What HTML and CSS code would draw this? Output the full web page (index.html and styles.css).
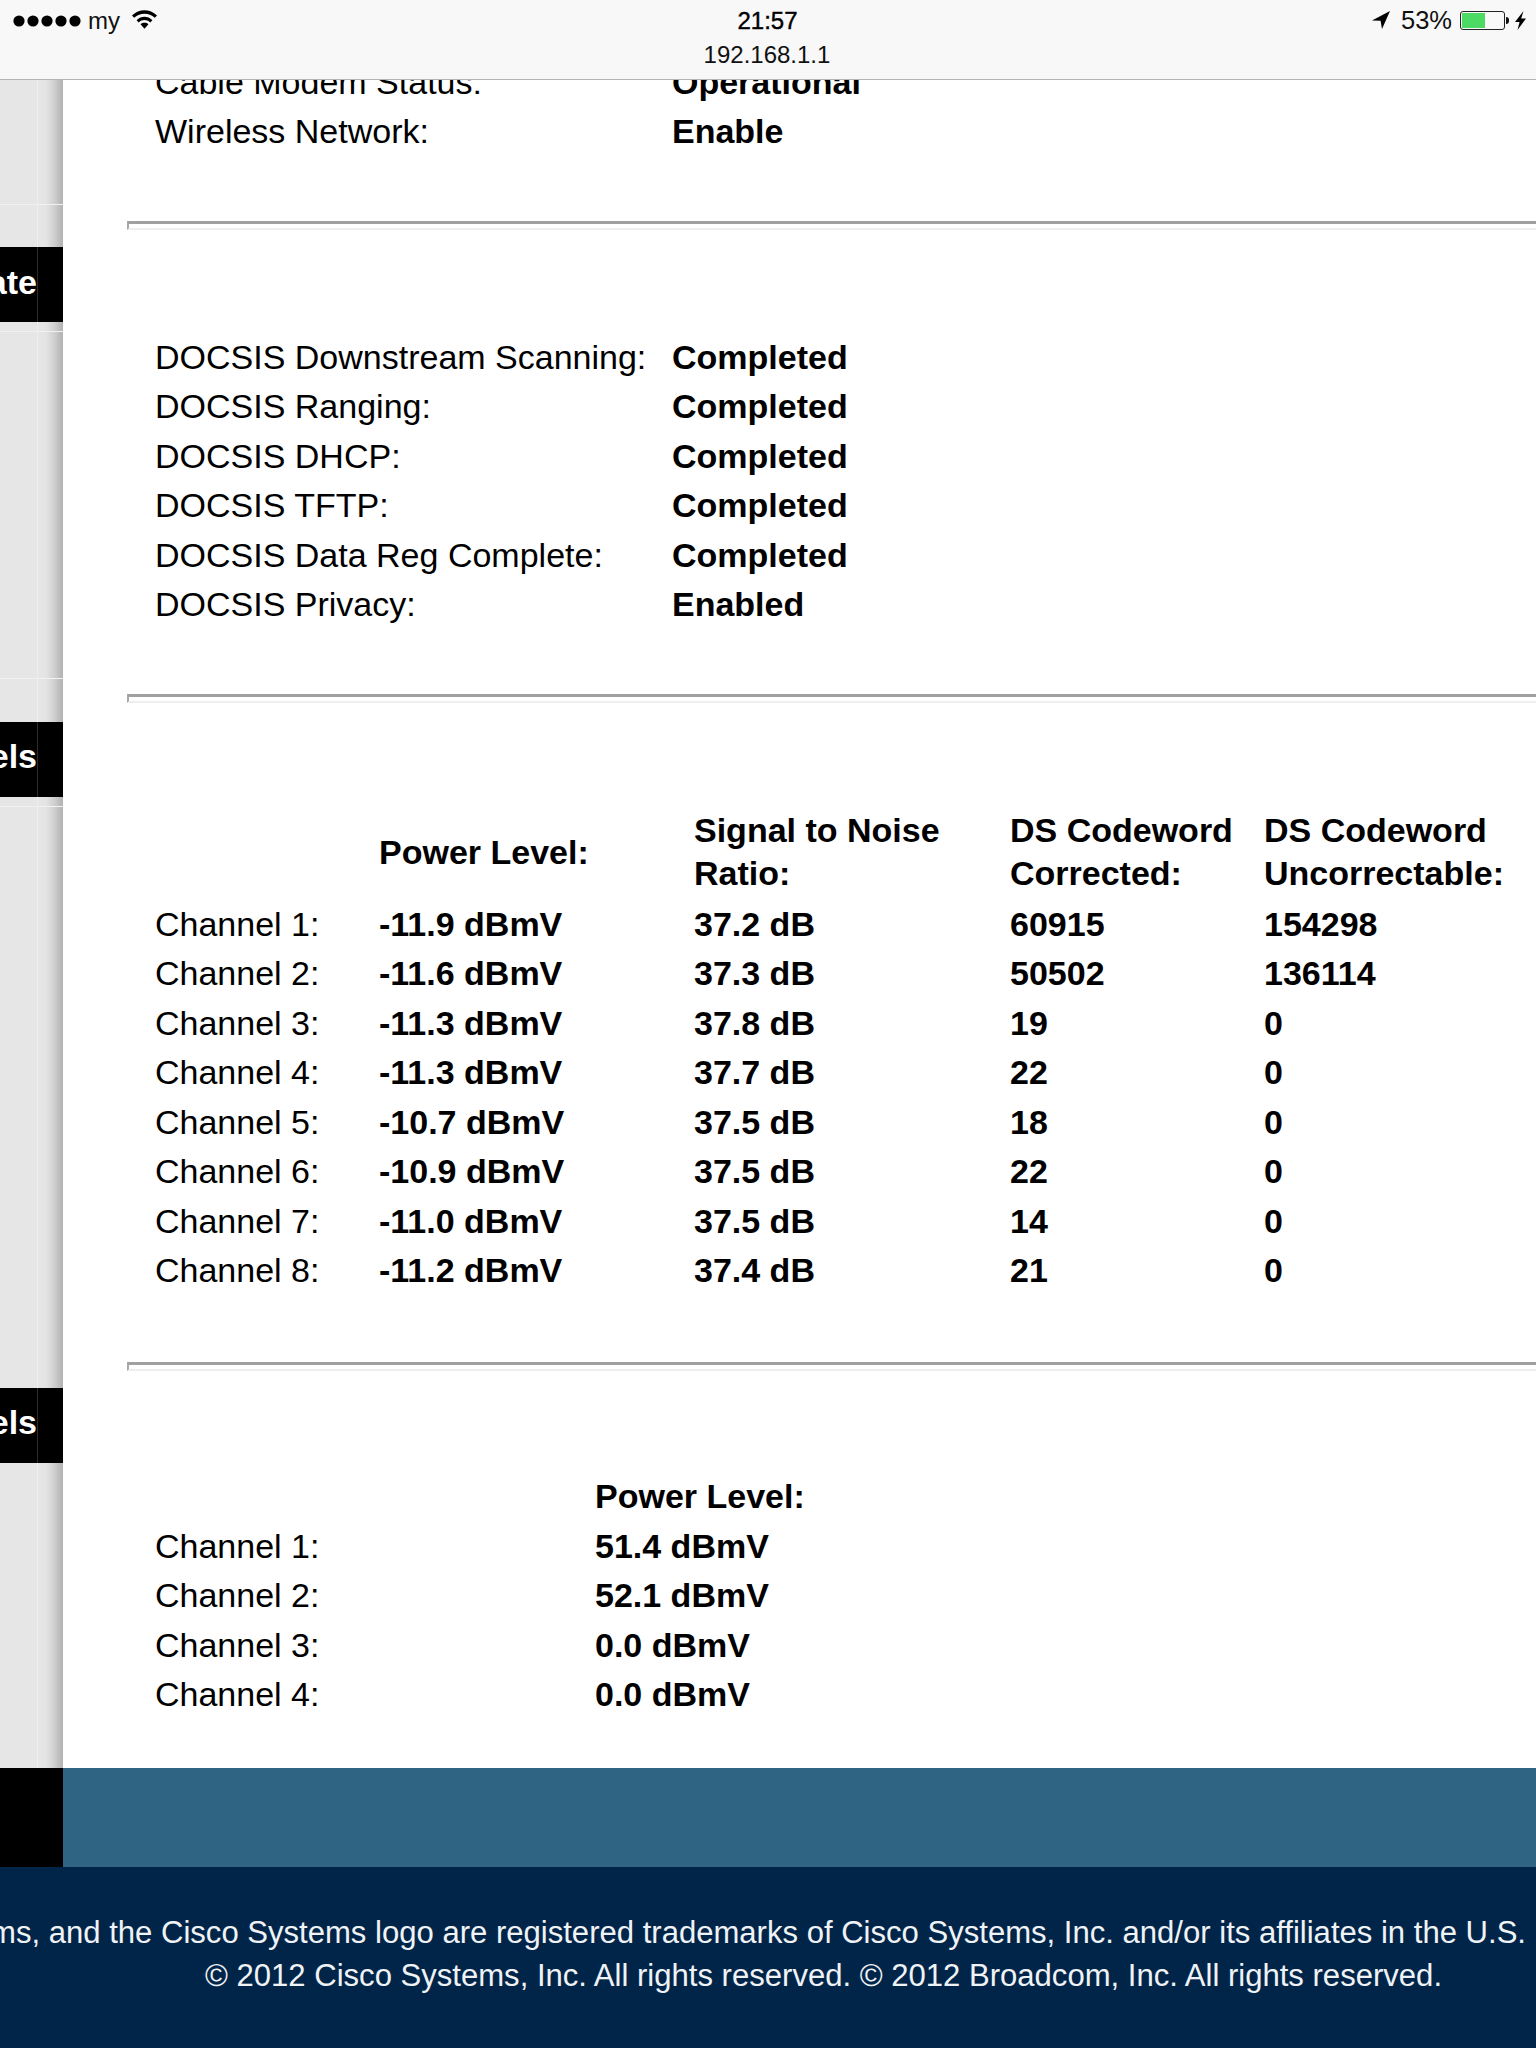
FILE: index.html
```html
<!DOCTYPE html>
<html lang="en">
<head>
<meta charset="utf-8">
<title>Status</title>
<link rel="stylesheet" href="styles.css">
</head>
<body>
<header class="status">
  <div class="status-row">
    <div class="status-left">
      <svg class="dots" viewBox="0 0 68 12" width="68" height="12"><circle cx="6" cy="6" r="5.6"/><circle cx="20" cy="6" r="5.6"/><circle cx="34" cy="6" r="5.6"/><circle cx="48" cy="6" r="5.6"/><circle cx="62" cy="6" r="5.6"/></svg>
      <span class="carrier">my</span>
      <svg class="wifi" viewBox="0 0 24 19" width="25" height="20"><path d="M0 6.2C6.8-.6 17.200-.6 24 6.200L21.900 8.400C16.300 3 7.700 3 2.100 8.400Z"/><path d="M4.400 10.600C8.800 6.300 15.200 6.300 19.600 10.600L17.500 12.800C14.200 9.800 9.800 9.800 6.500 12.800Z"/><path d="M8.200 14.600C10.400 12.700 13.600 12.700 15.800 14.600L12 18.800Z"/></svg>
    </div>
    <div class="clock">21:57</div>
    <div class="status-right">
      <svg class="arrow" viewBox="0 0 18 18" width="18" height="18"><path d="M18 0L0 9.500L8.600 9.700L10 18Z"/></svg>
      <span class="battery-pct">53%</span>
      <span class="battery"><span class="battery-fill"></span></span>
      <span class="battery-nub"></span>
      <svg class="bolt" viewBox="0 0 11 19" width="11" height="19"><path d="M8.500 0L0 11H4.600L2.500 19L11 7.500H6.200Z"/></svg>
    </div>
  </div>
  <div class="url">192.168.1.1</div>
</header>

<main class="main">
  <nav class="side">
    <div class="seg seg-a"></div>
    <div class="seg seg-b"></div>
    <div class="tab"><span>Cable Modem State</span></div>
    <div class="seg seg-c"></div>
    <div class="seg seg-d"></div>
    <div class="seg seg-e"></div>
    <div class="tab tab-low"><span>Downstream Channels</span></div>
    <div class="seg seg-c"></div>
    <div class="seg seg-f"></div>
    <div class="tab tab-low"><span>Upstream Channels</span></div>
    <div class="seg seg-rest"></div>
  </nav>

  <section class="content">
    <table class="info first">
      <tr><td>Cable Modem Status:</td><th>Operational</th></tr>
      <tr><td>Wireless Network:</td><th>Enable</th></tr>
    </table>
    <div class="rule rule-one"></div>

    <table class="info docsis">
      <tr><td>DOCSIS Downstream Scanning:</td><th>Completed</th></tr>
      <tr><td>DOCSIS Ranging:</td><th>Completed</th></tr>
      <tr><td>DOCSIS DHCP:</td><th>Completed</th></tr>
      <tr><td>DOCSIS TFTP:</td><th>Completed</th></tr>
      <tr><td>DOCSIS Data Reg Complete:</td><th>Completed</th></tr>
      <tr><td>DOCSIS Privacy:</td><th>Enabled</th></tr>
    </table>
    <div class="rule rule-two"></div>

    <table class="down">
      <colgroup><col class="c1"><col class="c2"><col class="c3"><col class="c4"><col class="c5"></colgroup>
      <tr class="head"><td></td><th>Power Level:</th><th>Signal to Noise<br>Ratio:</th><th>DS Codeword<br>Corrected:</th><th>DS Codeword<br>Uncorrectable:</th></tr>
      <tr><td>Channel 1:</td><th>-11.9 dBmV</th><th>37.2 dB</th><th>60915</th><th>154298</th></tr>
      <tr><td>Channel 2:</td><th>-11.6 dBmV</th><th>37.3 dB</th><th>50502</th><th>136114</th></tr>
      <tr><td>Channel 3:</td><th>-11.3 dBmV</th><th>37.8 dB</th><th>19</th><th>0</th></tr>
      <tr><td>Channel 4:</td><th>-11.3 dBmV</th><th>37.7 dB</th><th>22</th><th>0</th></tr>
      <tr><td>Channel 5:</td><th>-10.7 dBmV</th><th>37.5 dB</th><th>18</th><th>0</th></tr>
      <tr><td>Channel 6:</td><th>-10.9 dBmV</th><th>37.5 dB</th><th>22</th><th>0</th></tr>
      <tr><td>Channel 7:</td><th>-11.0 dBmV</th><th>37.5 dB</th><th>14</th><th>0</th></tr>
      <tr><td>Channel 8:</td><th>-11.2 dBmV</th><th>37.4 dB</th><th>21</th><th>0</th></tr>
    </table>
    <div class="rule rule-three"></div>

    <table class="up">
      <tr class="up-head"><td></td><th>Power Level:</th></tr>
      <tr><td>Channel 1:</td><th>51.4 dBmV</th></tr>
      <tr><td>Channel 2:</td><th>52.1 dBmV</th></tr>
      <tr><td>Channel 3:</td><th>0.0 dBmV</th></tr>
      <tr><td>Channel 4:</td><th>0.0 dBmV</th></tr>
    </table>
  </section>
</main>

<div class="band"><div class="band-black"></div><div class="band-blue"></div></div>

<footer class="foot">
  <p class="foot-wide"><span>Cisco, Cisco Systems, and the Cisco Systems logo are registered trademarks of Cisco Systems, Inc. and/or its affiliates in the U.S.</span></p>
  <p class="foot-line">© 2012 Cisco Systems, Inc. All rights reserved. © 2012 Broadcom, Inc. All rights reserved.</p>
</footer>
</body>
</html>
```

FILE: styles.css
```css
* { box-sizing: border-box; }
html, body { margin: 0; padding: 0; }
body {
  width: 1536px;
  height: 2048px;
  overflow: hidden;
  position: relative;
  background: #fff;
  color: #000;
  font-family: "Liberation Sans", Arial, sans-serif;
  font-size: 34px;
}

/* status bar floats over the scrolled page */
.status {
  position: absolute;
  top: 0;
  left: 0;
  width: 1536px;
  height: 80px;
  background: #f8f8f8;
  border-bottom: 1px solid #b4b4b4;
  z-index: 2;
}
.status-row {
  display: grid;
  grid-template-columns: 1fr auto 1fr;
  align-items: center;
  height: 42px;
  padding: 0 13px;
}
.status-left { display: flex; align-items: center; }
.dots { fill: #000; margin-top: -1px; }
.carrier { font-size: 24px; margin-left: 7px; color: #111; }
.wifi { fill: #000; margin-left: 12px; margin-top: -4px; }
.clock { font-size: 24px; font-weight: 400; -webkit-text-stroke: 0.4px #000; text-align: center; margin-left: -1px; }
.status-right { display: flex; align-items: center; justify-content: flex-end; margin-right: -3px; margin-top: -2px; }
.arrow { fill: #000; margin-right: 11px; }
.battery-pct { font-size: 25.500px; color: #111; margin-right: 8px; }
.battery {
  width: 45px;
  height: 19px;
  border: 1px solid #222;
  border-radius: 3px;
  padding: 1px;
  display: block;
}
.battery-fill { display: block; width: 23px; height: 100%; background: #4cd964; }
.battery-nub { width: 3px; height: 7px; background: #111; border-radius: 0 3px 3px 0; margin-left: 1px; }
.bolt { fill: #000; margin-left: 6px; }
.url { font-size: 24px; text-align: center; line-height: 26px; color: #111; padding-right: 2px; }

/* page */
.main { display: flex; height: 1768px; }
.side { width: 63px; flex: none; display: flex; flex-direction: column; }
.seg {
  flex: none;
  background: linear-gradient(to right, #e6e6e6 0, #e6e6e6 37px, #eeeeee 37px, #eeeeee 38px, #e6e6e6 38px, #e4e4e4 46px, #d0d0d0 54px, #b4b4b4 62px, #b4b4b4 63px);
  border-bottom: 1px solid #f1f1f1;
}
.seg-a { height: 205px; }
.seg-b { height: 42px; border-bottom: 0; }
.seg-c { height: 10px; }
.seg-d { height: 347px; }
.seg-e { height: 43px; border-bottom: 0; }
.seg-f { height: 581px; border-bottom: 0; }
.seg-rest { flex: 1; border-bottom: 0; }
.tab {
  flex: none;
  height: 75px;
  background: linear-gradient(to right, #000 37px, #2b2b2b 37px, #2b2b2b 38px, #000 38px);
  color: #fff;
  font-weight: 700;
  font-size: 34px;
  line-height: 38px;
  display: flex;
  justify-content: flex-end;
  align-items: center;
  overflow: hidden;
  white-space: nowrap;
  padding: 0 26px 5px 0;
}
.tab-low { padding-bottom: 8px; }
.tab span { flex: none; }

.content { flex: 1; min-width: 0; padding-top: 57px; }

table { border-collapse: collapse; table-layout: fixed; margin-left: 92px; }
td, th { padding: 0; text-align: left; font-size: 34px; line-height: 38px; height: 49.500px; white-space: nowrap; vertical-align: middle; }
th { font-weight: 700; }
.info { width: 800px; }
.info td { width: 517px; }
.up { width: 800px; }
.up td { width: 440px; }
.down { width: 1381px; }
.c1 { width: 224px; }
.c2 { width: 315px; }
.c3 { width: 316px; }
.c4 { width: 254px; }
.c5 { width: 272px; }
.head th { height: 90px; line-height: 43px; padding-bottom: 4px; }
.up-head td, .up-head th { height: 49.500px; }

.docsis { margin-top: 102px; }
.down { margin-top: 106px; }
.up { margin-top: 100.500px; }

.rule {
  margin-left: 64px;
  height: 9px;
  border-top: 3px solid #a0a0a0;
  border-left: 2px solid #a8a8a8;
  border-bottom: 2px solid #eeeeee;
  background: #fff;
}
.rule-one { margin-top: 65px; }
.rule-two { margin-top: 65px; }
.rule-three { margin-top: 67px; }

.band { display: flex; height: 99px; }
.band-black { width: 63px; background: #000; }
.band-blue { flex: 1; background: #2f6582; }

.foot {
  height: 181px;
  background: #012549;
  color: #f0f3f6;
  font-size: 31.070px;
  padding-top: 44px;
}
.foot p { margin: 0; line-height: 43px; white-space: nowrap; }
.foot-wide { display: flex; justify-content: flex-end; overflow: hidden; padding-right: 10px; }
.foot-wide span { flex: none; }
.foot-line { text-align: center; padding-left: 111px; }
```
